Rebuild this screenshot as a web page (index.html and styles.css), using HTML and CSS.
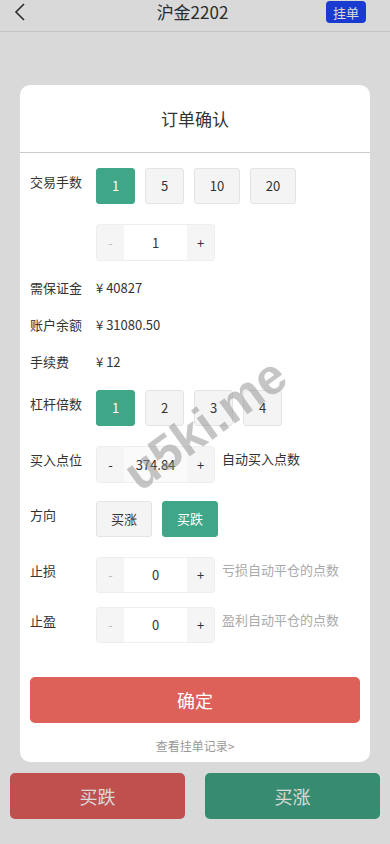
FILE: index.html
```html
<!DOCTYPE html>
<html lang="zh-CN">
<head>
    <meta charset="UTF-8">
    <meta name="viewport" content="width=device-width, initial-scale=1.0">
    <title>沪金2202</title>
    <link rel="stylesheet" href="styles.css">
</head>
<body>
    <header class="topbar">
        <a class="back" href="#">
            <svg width="12" height="20" viewBox="0 0 12 20"><polyline points="10,2 2,10 10,18" fill="none" stroke="#333" stroke-width="1.6"/></svg>
        </a>
        <h1 class="title">沪金2202</h1>
        <button class="pending-btn">挂单</button>
    </header>

    <main class="content"></main>

    <footer class="bottom-bar">
        <button class="trade-btn down">买跌</button>
        <button class="trade-btn up">买涨</button>
    </footer>

    <div class="mask">
        <div class="dialog">
            <div class="dialog-title">订单确认</div>
            <div class="dialog-body">
                <div class="row">
                    <span class="label">交易手数</span>
                    <div class="options">
                        <button class="opt active">1</button>
                        <button class="opt">5</button>
                        <button class="opt wide">10</button>
                        <button class="opt wide">20</button>
                    </div>
                </div>
                <div class="row tight">
                    <span class="label"></span>
                    <div class="stepper">
                        <span class="step disabled">-</span>
                        <span class="step-value">1</span>
                        <span class="step">+</span>
                    </div>
                </div>
                <div class="row info">
                    <span class="label">需保证金</span>
                    <span class="value">¥ 40827</span>
                </div>
                <div class="row info">
                    <span class="label">账户余额</span>
                    <span class="value">¥ 31080.50</span>
                </div>
                <div class="row info">
                    <span class="label">手续费</span>
                    <span class="value">¥ 12</span>
                </div>
                <div class="row">
                    <span class="label">杠杆倍数</span>
                    <div class="options">
                        <button class="opt active">1</button>
                        <button class="opt">2</button>
                        <button class="opt">3</button>
                        <button class="opt">4</button>
                    </div>
                </div>
                <div class="row tight">
                    <span class="label">买入点位</span>
                    <div class="stepper">
                        <span class="step">-</span>
                        <span class="step-value muted">374.84</span>
                        <span class="step">+</span>
                    </div>
                    <span class="hint dark">自动买入点数</span>
                </div>
                <div class="row">
                    <span class="label">方向</span>
                    <div class="options">
                        <button class="opt dir">买涨</button>
                        <button class="opt dir active">买跌</button>
                    </div>
                </div>
                <div class="row close">
                    <span class="label">止损</span>
                    <div class="stepper">
                        <span class="step disabled">-</span>
                        <span class="step-value">0</span>
                        <span class="step">+</span>
                    </div>
                    <span class="hint">亏损自动平仓的点数</span>
                </div>
                <div class="row last">
                    <span class="label">止盈</span>
                    <div class="stepper">
                        <span class="step disabled">-</span>
                        <span class="step-value">0</span>
                        <span class="step">+</span>
                    </div>
                    <span class="hint">盈利自动平仓的点数</span>
                </div>
                <button class="confirm">确定</button>
                <a class="records" href="#">查看挂单记录&gt;</a>
            </div>
        </div>
    </div>

    <div class="watermark">u5ki.me</div>
</body>
</html>
```

FILE: styles.css
```css
* {
    box-sizing: border-box;
}
body {
    margin: 0;
    min-height: 100vh;
    display: flex;
    flex-direction: column;
    background: #fff;
    font-family: "Noto Sans CJK SC", "Noto Sans", sans-serif;
    color: #333;
}
button {
    font-family: inherit;
    border: none;
    cursor: pointer;
}
.topbar {
    height: 32px;
    display: grid;
    grid-template-columns: 1fr auto 1fr;
    align-items: start;
    border-bottom: 1px solid #e6e6e6;
    padding: 0 24px 0 14px;
}
.back {
    display: flex;
    padding-top: 2px;
    width: 40px;
}
.title {
    margin: 0 0 0 5px;
    font-size: 17px;
    font-weight: normal;
    line-height: 24px;
}
.pending-btn {
    justify-self: end;
    margin-top: 1px;
    width: 40px;
    height: 22px;
    border-radius: 4px;
    background: #1f46f5;
    color: #fff;
    font-size: 13px;
    padding: 0;
}
.content {
    flex: 1;
}
.bottom-bar {
    display: flex;
    gap: 20px;
    padding: 0 10px 25px;
}
.trade-btn {
    flex: 1;
    height: 46px;
    border-radius: 5px;
    color: #fff;
    font-size: 18px;
}
.trade-btn.down {
    background: #e25e5c;
}
.trade-btn.up {
    background: #41a485;
}
.mask {
    position: fixed;
    inset: 0;
    background: rgba(0, 0, 0, 0.15);
    display: flex;
    align-items: center;
    justify-content: center;
}
.dialog {
    width: 350px;
    background: #fff;
    border-radius: 10px;
    margin-top: 2px;
}
.dialog-title {
    height: 68px;
    line-height: 68px;
    text-align: center;
    font-size: 17px;
    border-bottom: 1px solid #ccc;
}
.dialog-body {
    padding: 15px 10px 8px;
}
.row {
    display: flex;
    align-items: flex-start;
    margin-bottom: 20px;
    font-size: 13px;
}
.row.tight {
    margin-bottom: 18px;
}
.row.info {
    margin-bottom: 19px;
    line-height: 18px;
}
.row.close {
    margin-bottom: 14px;
}
.row.last {
    margin-bottom: 34px;
}
.label {
    width: 66px;
    flex-shrink: 0;
    line-height: 18px;
    padding-top: 5px;
}
.row.info .label {
    padding-top: 0;
}
.value {
    font-size: 13px;
}
.options {
    display: flex;
    gap: 10px;
}
.opt {
    min-width: 39px;
    height: 36px;
    border-radius: 3px;
    background: #f4f4f4;
    border: 1px solid #e4e4e4;
    color: #333;
    font-size: 13px;
    padding: 0 10px;
}
.opt.wide {
    min-width: 46px;
}
.opt.dir {
    min-width: 56px;
}
.opt.active {
    background: #3fa687;
    border-color: #3fa687;
    color: #fff;
}
.stepper {
    display: flex;
    width: 119px;
    height: 37px;
    border: 1px solid #eee;
    border-radius: 3px;
    overflow: hidden;
    font-size: 13px;
}
.row.close .stepper,
.row.last .stepper {
    height: 36px;
}
.step {
    width: 27px;
    background: #f5f5f5;
    display: flex;
    align-items: center;
    justify-content: center;
    color: #333;
}
.step.disabled {
    color: #bbb;
}
.step-value {
    flex: 1;
    display: flex;
    align-items: center;
    justify-content: center;
    background: #fff;
}
.step-value.muted {
    background: #fafafa;
}
.hint {
    margin-left: 7px;
    line-height: 18px;
    padding-top: 4px;
    color: #aaa;
    font-size: 13px;
}
.hint.dark {
    color: #333;
}
.confirm {
    display: block;
    width: 100%;
    height: 46px;
    border-radius: 5px;
    background: #dd6059;
    color: #fff;
    font-size: 18px;
}
.records {
    display: block;
    margin-top: 14px;
    line-height: 17px;
    text-align: center;
    font-size: 12px;
    color: #999;
    text-decoration: none;
}
.watermark {
    position: fixed;
    left: 112px;
    top: 395px;
    transform: rotate(-36deg);
    font-family: "Liberation Sans", sans-serif;
    font-weight: bold;
    font-size: 50px;
    color: rgba(140, 140, 140, 0.5);
    pointer-events: none;
}
```
